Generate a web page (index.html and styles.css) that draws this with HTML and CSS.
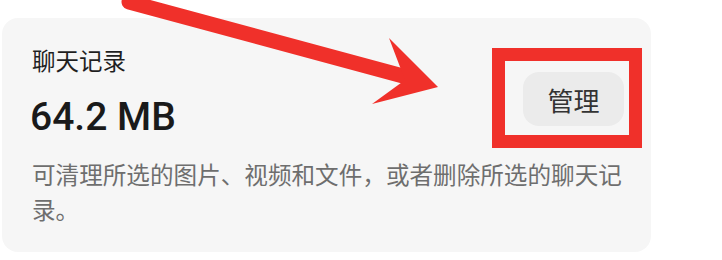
FILE: index.html
```html
<!DOCTYPE html>
<html lang="zh-CN">
<head>
    <meta charset="UTF-8">
    <meta name="viewport" content="width=device-width, initial-scale=1.0">
    <title>聊天记录</title>
    <link rel="stylesheet" href="styles.css">
</head>
<body>

    <div class="page">
        <div class="card">
            <div class="card-head">
                <div class="info">
                    <div class="title">聊天记录</div>
                    <div class="amount">64.2 MB</div>
                </div>
                <button class="manage-btn">管理</button>
            </div>
            <p class="desc">可清理所选的图片、视频和文件，或者删除所选的聊天记录。</p>
        </div>

        <!-- annotation: arrow + highlight box -->
        <svg class="arrow" width="722" height="260" viewBox="0 0 722 260">
            <line x1="129" y1="2" x2="414" y2="79" stroke="#f0302a" stroke-width="15" stroke-linecap="round"/>
            <polygon points="389,38 438,87 372,104 405,80" fill="#f0302a"/>
        </svg>
        <div class="highlight"></div>
    </div>

</body>
</html>
```

FILE: styles.css
```css
body {
    margin: 0;
    background: #fff;
    font-family: "Noto Sans CJK SC", "Noto Sans", sans-serif;
    color: #1c1c1c;
}
.page {
    position: relative;
    width: 722px;
    height: 260px;
    padding-top: 18px;
    box-sizing: border-box;
    overflow: hidden;
}
.card {
    margin-left: 2px;
    width: 649px;
    box-sizing: border-box;
    padding: 26px 24px 25px 30px;
    background: #f6f6f6;
    border-radius: 16px;
}
.card-head {
    display: flex;
    justify-content: space-between;
    align-items: flex-start;
    padding-right: 3px;
}
.title {
    font-size: 23.5px;
    line-height: 32px;
    color: #1f1f1f;
}
.amount {
    margin-top: 21px;
    margin-left: -2px;
    font-family: Roboto, "Noto Sans", sans-serif;
    font-weight: 500;
    font-size: 39px;
    line-height: 40px;
    color: #1a1a1a;
}
.manage-btn {
    margin-top: 28px;
    width: 101px;
    height: 54px;
    border: none;
    border-radius: 16px;
    background: #ebebeb;
    font-family: "Noto Sans CJK SC", sans-serif;
    font-size: 26px;
    color: #333;
    padding: 0;
}
.desc {
    margin: 20px 0 0;
    font-size: 23.6px;
    line-height: 35px;
    color: #6e6e6e;
}
.arrow {
    position: absolute;
    left: 0;
    top: 0;
}
.highlight {
    position: absolute;
    left: 492px;
    top: 48px;
    width: 150px;
    height: 100px;
    box-sizing: border-box;
    border: 13px solid #f0302a;
}
```
